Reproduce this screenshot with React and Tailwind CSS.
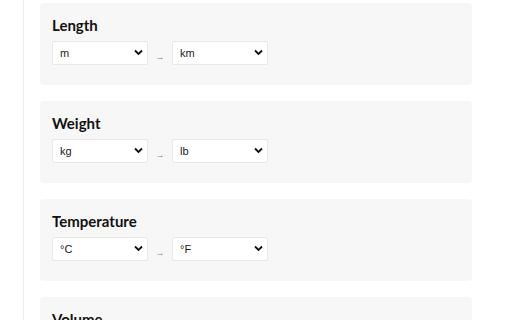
import React, { useState } from 'react';

const units = [
  { title: 'Length', from: 'm', to: 'km', options: ['m', 'km', 'cm', 'mm', 'mi', 'ft', 'in'] },
  { title: 'Weight', from: 'kg', to: 'lb', options: ['kg', 'g', 'lb', 'oz'] },
  { title: 'Temperature', from: '°C', to: '°F', options: ['°C', '°F', 'K'] },
  { title: 'Volume', from: 'L', to: 'gal', options: ['L', 'mL', 'gal'] },
];

const UnitSelect = ({ value, options, onChange }) => (
  <div className="relative w-[96px] h-[24px]">
    <select
      value={value}
      onChange={(e) => onChange(e.target.value)}
      className="appearance-none w-full h-full bg-white border border-[#e8e8e8] rounded-[2px] pl-[7px] pr-5 text-[11px] text-[#1a1a1a] outline-none font-['Liberation_Sans',Arial,sans-serif]"
    >
      {options.map((o) => (
        <option key={o} value={o}>{o}</option>
      ))}
    </select>
    <svg
      className="pointer-events-none absolute right-[5px] top-[9px]"
      width="9"
      height="7"
      viewBox="0 0 9 7"
    >
      <path d="M1 1.5 L4.5 5 L8 1.5" fill="none" stroke="#111" strokeWidth="1.8" />
    </svg>
  </div>
);

const ConverterCard = ({ unit }) => {
  const [from, setFrom] = useState(unit.from);
  const [to, setTo] = useState(unit.to);

  return (
    <div className="bg-[#f7f7f7] rounded-[4px] px-3 pt-3 pb-[21px] mb-4">
      <h3 className="text-[15px] leading-[21px] font-bold text-[#111] mb-[4px] font-['Lato','Open_Sans',sans-serif]">
        {unit.title}
      </h3>
      <div className="flex items-end">
        <UnitSelect value={from} options={unit.options} onChange={setFrom} />
        <span className="w-[24px] text-center text-[9px] leading-[10px] text-[#888] mb-[2px]">→</span>
        <UnitSelect value={to} options={unit.options} onChange={setTo} />
      </div>
    </div>
  );
};

export default function App() {
  return (
    <div
      className="h-[320px] overflow-hidden bg-white flex"
      style={{ fontFamily: '"Liberation Sans", Arial, sans-serif' }}
    >
      <div className="w-[24px] border-r border-[#ececec] shrink-0" />
      <div className="pl-[16px] pt-[3px] w-[448px]">
        {units.map((u) => (
          <ConverterCard key={u.title} unit={u} />
        ))}
      </div>
    </div>
  );
}
